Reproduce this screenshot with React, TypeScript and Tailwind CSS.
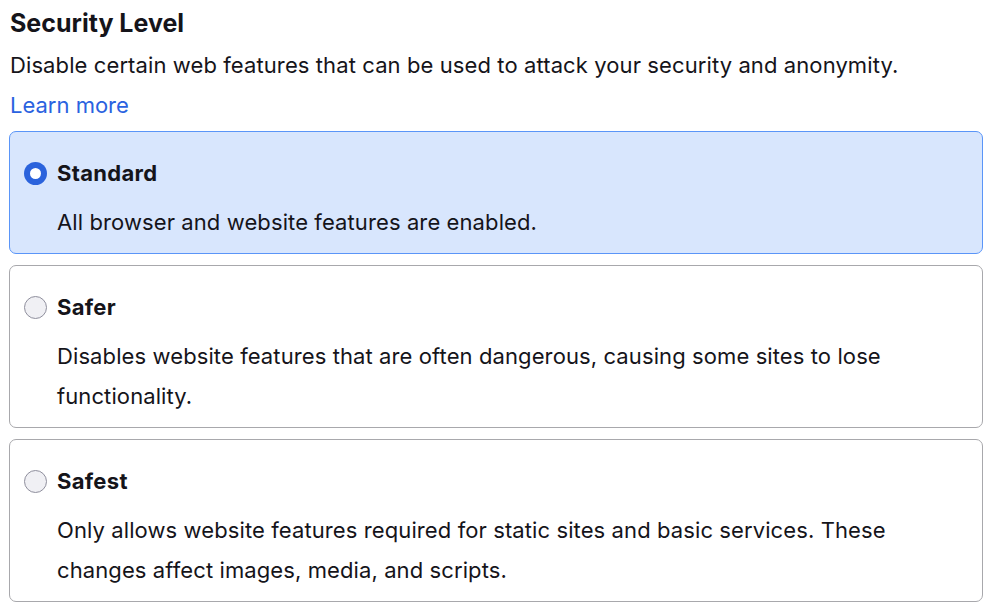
import React from "react";

const options = [
  {
    id: "standard",
    title: "Standard",
    desc: "All browser and website features are enabled.",
    selected: true,
  },
  {
    id: "safer",
    title: "Safer",
    desc: "Disables website features that are often dangerous, causing some sites to lose functionality.",
    selected: false,
  },
  {
    id: "safest",
    title: "Safest",
    desc: "Only allows website features required for static sites and basic services. These changes affect images, media, and scripts.",
    selected: false,
  },
];

function Radio({ selected }: { selected: boolean }) {
  if (selected) {
    return (
      <span className="box-border flex h-[23px] w-[23px] shrink-0 items-center justify-center rounded-full bg-[#2b63dc]">
        <span className="h-[11px] w-[11px] rounded-full bg-white" />
      </span>
    );
  }
  return (
    <span className="box-border h-[23px] w-[23px] shrink-0 rounded-full border-[1.5px] border-[#8f8f9d] bg-[#f0f0f4]" />
  );
}

export default function App() {
  return (
    <div
      className="min-h-[614px] w-[1000px] bg-white text-[#15141a]"
      style={{ fontFamily: "Inter, 'Noto Sans', sans-serif" }}
    >
      <div className="pl-[9px] pr-[17px] pt-[8px]">
        <h1 className="pl-[1px] text-[25px] font-bold leading-[30px]">Security Level</h1>
        <p className="mt-[12px] pl-[1px] text-[22px] leading-[30px] tracking-[0.1px]">
          Disable certain web features that can be used to attack your security and anonymity.
        </p>
        <a className="mt-[10px] block pl-[1px] text-[22px] leading-[30px] text-[#2a62e0]" href="#">
          Learn more
        </a>
        <div className="mt-[11px] flex flex-col gap-[11px]">
          {options.map((o) => (
            <div
              key={o.id}
              className={
                o.selected
                  ? "rounded-[7px] border-[1.5px] border-[#5a95f8] bg-[#d8e6fd] pb-[11px] pl-[14px] pr-[20px] pt-[20px]"
                  : "rounded-[7px] border-[1.5px] border-[#a8a8ac] bg-white pb-[11px] pl-[14px] pr-[20px] pt-[20px]"
              }
            >
              <div className="flex h-[42px] items-center gap-[10px]">
                <Radio selected={o.selected} />
                <span className="text-[22px] font-bold tracking-[0.3px]">{o.title}</span>
              </div>
              <p className="mt-[8px] pl-[33px] text-[22px] leading-[40px] tracking-[0.1px]">{o.desc}</p>
            </div>
          ))}
        </div>
      </div>
    </div>
  );
}
